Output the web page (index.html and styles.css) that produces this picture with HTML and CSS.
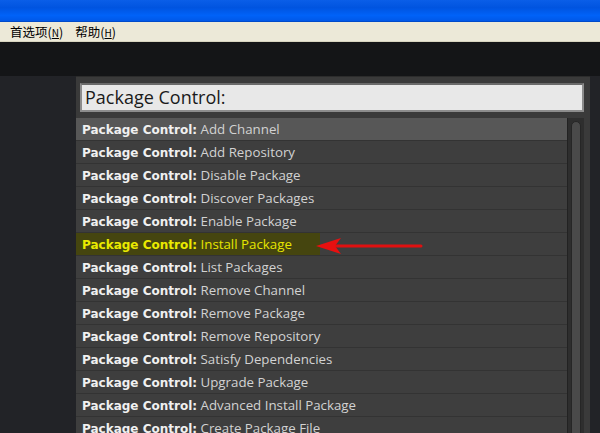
FILE: index.html
```html
<!DOCTYPE html>
<html>
<head>
<meta charset="utf-8">
<link rel="stylesheet" href="styles.css">
</head>
<body>
<div class="titlebar"></div>
<div class="menubar">
  <span class="menu">首选项(<u>N</u>)</span>
  <span class="menu">帮助(<u>H</u>)</span>
</div>
<div class="topband"></div>
<div class="main">
  <div class="sidebar"></div>
  <div class="panel">
    <div class="inputbox">Package Control:</div>
    <div class="listwrap">
      <div class="list">
        <div class="row sel"><b>Package Control:</b> Add Channel</div>
        <div class="row"><b>Package Control:</b> Add Repository</div>
        <div class="row"><b>Package Control:</b> Disable Package</div>
        <div class="row"><b>Package Control:</b> Discover Packages</div>
        <div class="row"><b>Package Control:</b> Enable Package</div>
        <div class="row hl"><span class="mark"><b>Package Control:</b> Install Package</span>
          <svg class="arrow" width="120" height="20" viewBox="0 0 120 20">
            <line x1="18" y1="10" x2="106" y2="10" stroke="#e01010" stroke-width="3" stroke-linecap="round"/>
            <path d="M1 10 L26 2 L20 10 L26 18 Z" fill="#e81010"/>
          </svg>
        </div>
        <div class="row"><b>Package Control:</b> List Packages</div>
        <div class="row"><b>Package Control:</b> Remove Channel</div>
        <div class="row"><b>Package Control:</b> Remove Package</div>
        <div class="row"><b>Package Control:</b> Remove Repository</div>
        <div class="row"><b>Package Control:</b> Satisfy Dependencies</div>
        <div class="row"><b>Package Control:</b> Upgrade Package</div>
        <div class="row"><b>Package Control:</b> Advanced Install Package</div>
        <div class="row"><b>Package Control:</b> Create Package File</div>
      </div>
      <div class="scroll"><div class="thumb"></div></div>
    </div>
  </div>
  <div class="rightstrip"></div>
</div>
</body>
</html>
```

FILE: styles.css
```css
html, body {
  margin: 0;
  padding: 0;
  width: 600px;
  height: 433px;
  overflow: hidden;
  background: #222327;
}
.titlebar {
  height: 22px;
  background: linear-gradient(to bottom, #0a5ee8 0%, #0054e0 35%, #0062f8 70%, #0058e8 95%, #003fb0 100%);
}
.menubar {
  height: 20px;
  background: #ece9d8;
  border-bottom: 1px solid #d8d4c0;
  box-sizing: border-box;
  display: flex;
  align-items: center;
  padding-left: 10px;
  gap: 12px;
  font-family: "Noto Sans CJK SC", sans-serif;
  font-size: 12.5px;
  color: #000;
}
.menu u { text-decoration: underline; font-size: 10px; }
.topband {
  height: 34px;
  background: #141517;
}
.main {
  display: flex;
  height: 357px;
}
.sidebar {
  width: 76px;
  background: #222327;
}
.rightstrip {
  width: 10px;
  background: #222327;
}
.panel {
  flex: 1;
  background: #3a3a3a;
  border-top: 1px solid #2c2c2c;
  padding: 6px 6px 0 4px;
  display: flex;
  flex-direction: column;
}
.inputbox {
  height: 29px;
  box-sizing: border-box;
  background: #e8e8e8;
  border: 2px solid #8c8c8c;
  border-top-color: #6a6a6a;
  font-family: "Open Sans", sans-serif;
  font-size: 18px;
  line-height: 25px;
  padding-left: 3px;
  color: #1a1a1a;
}
.listwrap {
  display: flex;
  margin-top: 6px;
  margin-left: -4px;
}
.list {
  flex: 1;
}
.row {
  height: 23px;
  box-sizing: border-box;
  border-bottom: 1px solid #333333;
  background: #3e3e3e;
  font-family: "Open Sans", sans-serif;
  font-size: 13.3px;
  line-height: 23px;
  padding-left: 6px;
  color: #d2d2d2;
  white-space: nowrap;
  position: relative;
}
.row b {
  font-family: "DejaVu Sans", sans-serif;
  font-weight: bold;
  font-size: 12px;
  color: #f0f0f0;
}
.row.sel {
  background: #575757;
}
.row.hl {
  padding-left: 0;
}
.mark {
  display: inline-block;
  background: #45450f;
  color: #e6e600;
  padding-left: 6px;
  width: 238px;
  height: 22px;
}
.row.hl b { color: #eaea00; }
.arrow {
  position: absolute;
  left: 239px;
  top: 3px;
}
.scroll {
  width: 16px;
  background: #2e2e2e;
  border-left: 1px solid #222;
  display: flex;
  justify-content: center;
  padding-top: 3px;
}
.thumb {
  width: 8px;
  height: 400px;
  background: #4a4a4a;
  border: 1px solid #262626;
  border-radius: 5px;
}
```
